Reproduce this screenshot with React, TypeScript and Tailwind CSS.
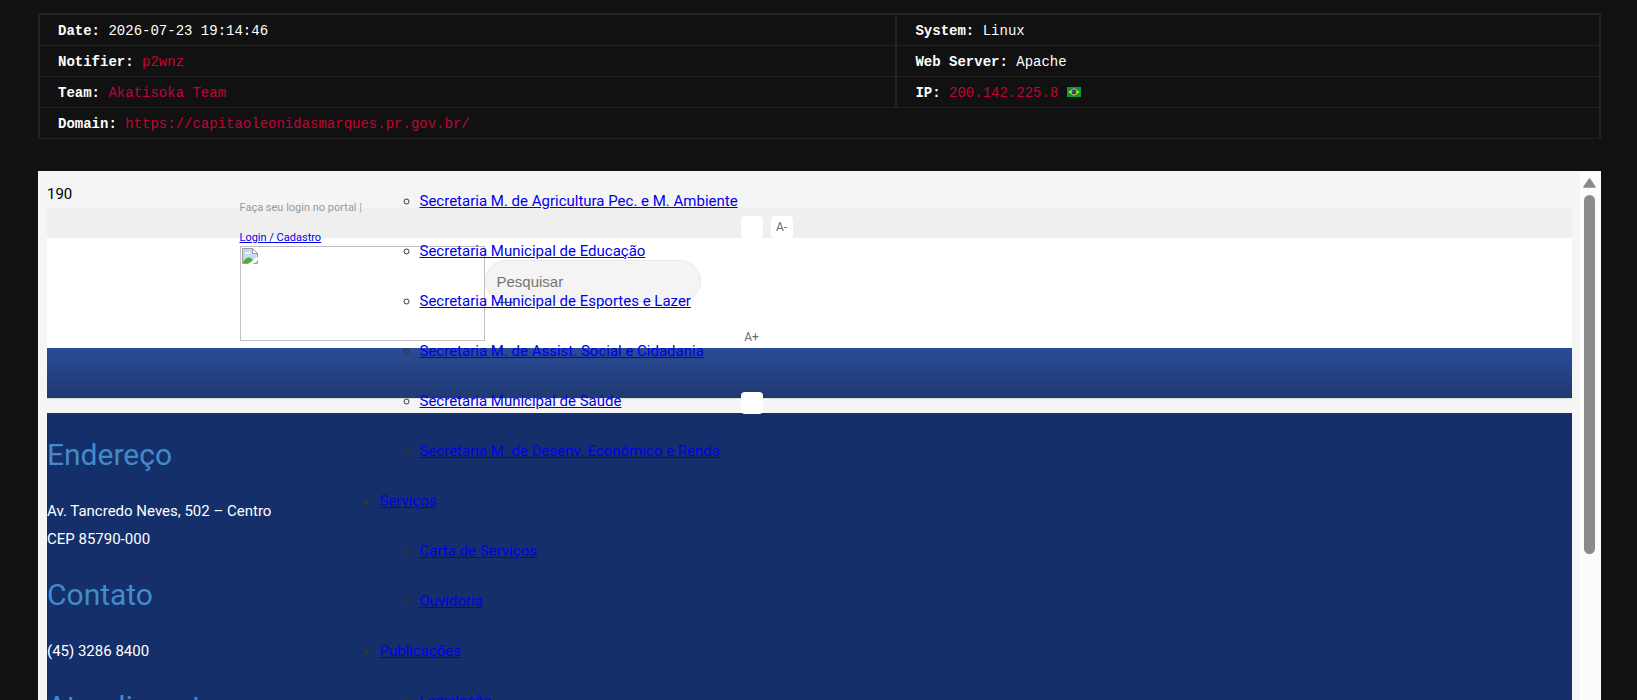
import type { ReactNode } from "react";

type Entry = { label: string; children?: string[] };

const departments = [
  "Secretaria M. de Agricultura Pec. e M. Ambiente",
  "Secretaria Municipal de Educação",
  "Secretaria Municipal de Esportes e Lazer",
  "Secretaria M. de Assist. Social e Cidadania",
  "Secretaria Municipal de Saúde",
  "Secretaria M. de Desenv. Econômico e Renda",
];

const sections: Entry[] = [
  { label: "Serviços", children: ["Carta de Serviços", "Ouvidoria"] },
  { label: "Publicações", children: ["Legislação"] },
];

function Cell({ label, children, span, divider }: { label: string; children: ReactNode; span?: number; divider?: boolean }) {
  return (
    <td
      colSpan={span}
      className={
        divider
          ? "h-[31px] border-b border-r-2 border-b-[#222] border-r-[#222] px-[18px] pt-0.5 pb-0"
          : "h-[31px] border-b border-[#222] px-[18px] pt-0.5 pb-0"
      }
    >
      <b>{label}:</b> {children}
    </td>
  );
}

function Red({ children }: { children: ReactNode }) {
  return (
    <a href="#" className="text-[#c10435]">
      {children}
    </a>
  );
}

function Flag() {
  return (
    <svg viewBox="0 0 14 10" className="inline-block h-[10px] w-[14px] align-baseline" role="img" aria-label="Brazil">
      <rect width="14" height="10" fill="#009b3a" />
      <path d="M7 1.2 12.8 5 7 8.8 1.2 5Z" fill="#e5cf14" />
      <circle cx="7" cy="5" r="2.4" fill="#1c2f7c" />
      <path d="M5 4.4Q7.4 4.2 9 5.8" stroke="#8fa3c8" strokeWidth=".5" fill="none" />
    </svg>
  );
}

function BrokenImage() {
  return (
    <svg viewBox="0 0 16 16" className="h-4 w-4">
      <path d="M.5.5h10l5 5v10H.5z" fill="#c6d9f7" stroke="#9a9a9a" />
      <path d="M3 6a2 2 0 0 1 3-1.500A1.800 1.800 0 0 1 8.500 6z" fill="#fff" />
      <path d="M1 15c1-4 4-5.500 6-5.500S11 11 12 15z" fill="#55a83a" />
      <path d="M6 16 16 8.500V12l-5 4z" fill="#fff" />
      <path d="M10.500.5v5h5z" fill="#fff" stroke="#9a9a9a" />
    </svg>
  );
}

function SizeButton({ children, label }: { children?: ReactNode; label: string }) {
  return (
    <button
      type="button"
      aria-label={label}
      className="flex h-[22px] w-[22px] items-center justify-center rounded bg-white text-xs text-[#6b6b6b]"
    >
      {children}
    </button>
  );
}

const link = "text-[#0000ee] underline";

function Menu() {
  return (
    <ul className="list-disc text-[15px] leading-[50px] text-[#333]">
      <li className="list-none">
        <ul className="list-[circle] pl-10">
          {departments.map((d) => (
            <li key={d}>
              <a href="#" className={link}>{d}</a>
            </li>
          ))}
        </ul>
      </li>
      {sections.map((s) => (
        <li key={s.label}>
          <a href="#" className={link}>{s.label}</a>
          <ul className="list-[circle] pl-10">
            {s.children?.map((c) => (
              <li key={c}>
                <a href="#" className={link}>{c}</a>
              </li>
            ))}
          </ul>
        </li>
      ))}
    </ul>
  );
}

function Heading({ children }: { children: ReactNode }) {
  return <h2 className="text-[30px] leading-[34px] text-[#428bca]">{children}</h2>;
}

export default function App() {
  return (
    <div className="flex h-screen flex-col overflow-hidden bg-[#111] pt-[13px] pr-9 pl-[38px]">
      <table className="w-full shrink-0 border-separate border-spacing-0 border-x-2 border-t-2 border-[#222] font-['Liberation_Mono',monospace] text-sm leading-5 text-white">
        <colgroup>
          <col className="w-[55%]" />
          <col />
        </colgroup>
        <tbody>
          <tr>
            <Cell label="Date" divider>2026-07-23 19:14:46</Cell>
            <Cell label="System">Linux</Cell>
          </tr>
          <tr>
            <Cell label="Notifier" divider><Red>p2wnz</Red></Cell>
            <Cell label="Web Server">Apache</Cell>
          </tr>
          <tr>
            <Cell label="Team" divider><Red>Akatisoka Team</Red></Cell>
            <Cell label="IP"><Red>200.142.225.8</Red> <Flag /></Cell>
          </tr>
          <tr>
            <Cell label="Domain" span={2}><Red>https://capitaoleonidasmarques.pr.gov.br/</Red></Cell>
          </tr>
        </tbody>
      </table>

      <div className="mt-8 flex min-h-0 flex-1 bg-[#f5f5f5] font-[Roboto,sans-serif]">
        <div className="relative min-w-0 flex-1 overflow-hidden pt-2 pr-2 pl-[9px]">
          <p className="h-[29px] text-[15px] leading-[31px] text-black">190</p>
          <div className="h-[30px] bg-[#efefef]" />
          <div className="h-[110px] bg-white" />
          <div className="h-[50px] bg-gradient-to-b from-[#2a4b96] to-[#1f3a72]" />
          <div className="h-[15px] border-t border-[#dcdcdc]" />
          <footer className="flex flex-col gap-[25px] bg-[#152f6b] pt-[25px] pb-10 text-[15px] leading-7 text-white">
            <Heading>Endereço</Heading>
            <p>
              Av. Tancredo Neves, 502 – Centro
              <br />
              CEP 85790-000
            </p>
            <Heading>Contato</Heading>
            <p>(45) 3286 8400</p>
            <Heading>Atendimento</Heading>
          </footer>

          <div className="absolute inset-x-0 top-5 mr-2 ml-[9px]">
            <div className="relative mx-auto flex w-full max-w-[1140px] items-start">
              <div className="w-[245px] shrink-0 pt-0.5 text-[11px] leading-[30px] text-[#999]">
                <p>Faça seu login no portal |</p>
                <a href="#" className="block h-[23px] text-[#0000ee] underline">Login / Cadastro</a>
                <div className="h-[95px] border border-[#c0c0c0] p-px">
                  <BrokenImage />
                </div>
              </div>
              <form className="mt-[69px] w-[216px]">
                <input
                  type="search"
                  aria-label="Pesquisar"
                  placeholder="Pesquisar"
                  className="h-[42px] w-full rounded-full border border-[#e9e9e9] bg-[#f4f4f4] px-[11px] font-['Liberation_Sans',sans-serif] text-[15px] placeholder:text-[#757575]"
                />
                <span className="ml-3 block h-px w-4 bg-[#555]" />
              </form>
              <div className="mt-[25px] ml-10 flex flex-col">
                <div className="flex gap-2">
                  <SizeButton label="Normal" />
                  <SizeButton label="Diminuir">A-</SizeButton>
                </div>
                <div className="mt-[88px] flex flex-col gap-11">
                  <SizeButton label="Aumentar">A+</SizeButton>
                  <SizeButton label="Contraste" />
                </div>
              </div>
              <nav className="absolute top-[-15px] left-[140px]">
                <Menu />
              </nav>
            </div>
          </div>
        </div>

        <div className="flex w-[21px] shrink-0 flex-col items-center gap-[7px] bg-[#fcfcfc] pt-[7px] pr-0.5" aria-hidden="true">
          <svg viewBox="0 0 13 10" className="h-[10px] w-[13px]">
            <path d="M6.500 1 12 9H1Z" fill="#8b8b8b" stroke="#8b8b8b" strokeWidth="1.500" strokeLinejoin="round" />
          </svg>
          <div className="h-[359px] w-[11px] rounded-full bg-[#8b8b8b]" />
        </div>
      </div>
    </div>
  );
}
